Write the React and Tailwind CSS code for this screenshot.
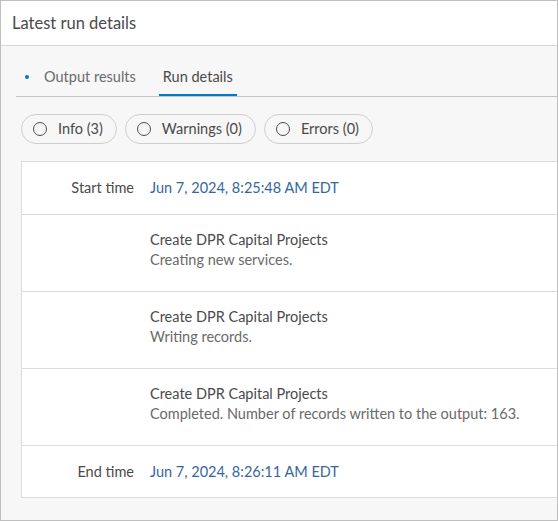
import React from "react";

const font = { fontFamily: "Lato, 'Open Sans', sans-serif" };

function Chip({ label }) {
    return (
        <div className="flex h-[30px] items-center rounded-full border border-[#cfcfcf] pl-[11px] pr-[13px] text-[14.5px] text-[#4a4a4a]">
            <span className="mr-[11px] block h-[14px] w-[14px] rounded-full border-[1.5px] border-[#4a4a4a]" />
            {label}
        </div>
    );
}

function LogRow({ title, text }) {
    return (
        <div className="flex h-[77px] border-b border-[#dcdcdc] pt-[15px]">
            <div className="ml-[128px] flex flex-col">
                <span className="text-[14.5px] leading-[20px] text-[#4a4a4a]">{title}</span>
                <span className="text-[14.5px] leading-[20px] text-[#6a6a6a]">{text}</span>
            </div>
        </div>
    );
}

function TimeRow({ label, value, h, last }) {
    return (
        <div className={`flex items-center ${h} ${last ? "" : "border-b border-[#dcdcdc]"}`}>
            <span className="w-[112px] text-right text-[14.5px] text-[#4a4a4a]">{label}</span>
            <span className="ml-[16px] text-[14.5px] text-[#35679c]">{value}</span>
        </div>
    );
}

export default function App() {
    return (
        <div className="h-[521px] w-[558px] overflow-hidden border border-[#bfbfbf] bg-[#f7f7f7]" style={font}>
            {/* Header */}
            <div className="flex h-[45px] items-center border-b border-[#d6d6d6] bg-white pl-[11px] text-[16.5px] text-[#4a4a4a]">
                Latest run details
            </div>

            {/* Tabs */}
            <div className="ml-[15px] mt-[16px] flex h-[35px] items-stretch border-b border-[#c4c4c4] text-[14.5px]">
                <div className="flex items-center pb-[4px] pl-[9px] pr-[12px] text-[#6b6b6b]">
                    <span className="mr-[15px] block h-[4px] w-[4px] rounded-full bg-[#007ac2]" />
                    Output results
                </div>
                <div className="ml-[11px] flex items-center border-b-2 border-[#007ac2] px-[4px] pb-[2px] text-[#4a4a4a]">
                    Run details
                </div>
            </div>

            {/* Filters */}
            <div className="ml-[20px] mt-[17px] flex gap-[8px]">
                <Chip label="Info (3)" />
                <Chip label="Warnings (0)" />
                <Chip label="Errors (0)" />
            </div>

            {/* Log table */}
            <div className="ml-[20px] mt-[17px] border-y border-l border-[#dcdcdc] bg-white">
                <TimeRow label="Start time" value="Jun 7, 2024, 8:25:48 AM EDT" h="h-[53px]" />
                <LogRow title="Create DPR Capital Projects" text="Creating new services." />
                <LogRow title="Create DPR Capital Projects" text="Writing records." />
                <LogRow title="Create DPR Capital Projects" text="Completed. Number of records written to the output: 163." />
                <TimeRow label="End time" value="Jun 7, 2024, 8:26:11 AM EDT" h="h-[51px]" last />
            </div>
        </div>
    );
}
